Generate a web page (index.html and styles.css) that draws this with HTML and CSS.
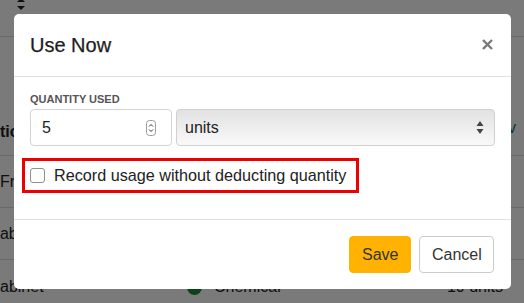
FILE: index.html
```html
<!DOCTYPE html>
<html lang="en">
<head>
  <meta charset="UTF-8" />
  <title>Use Now</title>
  <link rel="stylesheet" href="styles.css">
</head>
<body>

  <!-- Page behind the modal -->
  <div class="page">
    <div class="topbar">
      <svg class="sort" width="8" height="12" viewBox="0 0 8 12"><path d="M4 0L8 4H0Z M4 12L0 8H8Z" fill="#222"/></svg>
    </div>
    <div class="row head">
      <span class="cell-a">tion</span>
      <span class="chev">v</span>
    </div>
    <div class="row"><span class="cell-a">Fridge</span></div>
    <div class="row"><span class="cell-a">Lab bench</span></div>
    <div class="row last">
      <span class="cell-a">abinet</span>
      <span class="cell-b"><i class="dot"></i>Chemical</span>
      <span class="cell-c">10 units</span>
    </div>
  </div>

  <!-- Modal -->
  <div class="backdrop">
    <div class="modal">
      <div class="modal-header">
        <h3>Use Now</h3>
        <svg class="close" width="11" height="11" viewBox="0 0 11 11"><path d="M1 1L10 10M10 1L1 10" stroke="#7a7a7a" stroke-width="2.4"/></svg>
      </div>

      <div class="modal-body">
        <label class="field-label">QUANTITY USED</label>
        <div class="qty-row">
          <div class="number-field">
            <span>5</span>
            <svg class="spin" width="10" height="16" viewBox="0 0 10 16"><rect x="0.5" y="0.5" width="9" height="15" rx="3" fill="#fff" stroke="#9a9a9a"/><path d="M3 6.5L5 4.5L7 6.5M3 9.5L5 11.5L7 9.5" fill="none" stroke="#333" stroke-width="1"/></svg>
          </div>
          <div class="select-field">
            <span>units</span>
            <svg width="8" height="13" viewBox="0 0 8 13"><path d="M4 0L7.5 5H0.5Z M4 13L0.5 8H7.5Z" fill="#444"/></svg>
          </div>
        </div>

        <div class="check-row">
          <span class="checkbox"></span>
          <span>Record usage without deducting quantity</span>
        </div>
      </div>

      <div class="modal-footer">
        <button class="btn btn-save">Save</button>
        <button class="btn btn-cancel">Cancel</button>
      </div>
    </div>
  </div>

</body>
</html>
```

FILE: styles.css
```css
/* Global reset and font settings */
* { box-sizing: border-box; }
body, html {
  margin: 0;
  padding: 0;
  font-family: 'Liberation Sans', Arial, sans-serif;
  background-color: #fff;
  color: #333;
  overflow: hidden;
}

/* Page content behind the backdrop */
.page {
  width: 524px;
  height: 303px;
}
.topbar {
  height: 39px;
  border-bottom: 1px solid #ddd;
  padding-left: 17px;
}
.sort { display: block; margin-top: -2px; }
.row {
  height: 52px;
  border-bottom: 1px solid #ddd;
  display: flex;
  align-items: center;
  font-size: 16px;
  color: #222;
}
.row.head {
  height: 119px;
  align-items: flex-end;
  padding-bottom: 14px;
  font-weight: bold;
}
.row.last { align-items: flex-start; padding-top: 18px; }
.cell-a { margin-left: 0; }
.row:nth-child(4) .cell-a { margin-left: -9px; }
.cell-b {
  position: absolute;
  left: 187px;
  display: flex;
  align-items: center;
  gap: 12px;
}
.dot {
  width: 15px;
  height: 15px;
  border-radius: 50%;
  background: #1b8a2c;
  display: inline-block;
}
.cell-c { margin-left: auto; margin-right: 21px; }
.chev {
  margin-left: auto;
  margin-right: 8px;
  color: #0a6f84;
  font-weight: normal;
  margin-bottom: 4px;
}

/* Backdrop and modal */
.backdrop {
  position: fixed;
  inset: 0;
  background: rgba(0, 0, 0, 0.52);
  padding: 14px 13px 0 14px;
}
.modal {
  width: 497px;
  background: #fff;
  border-radius: 5px;
}
.modal-header {
  height: 63px;
  border-bottom: 1px solid #dee2e6;
  display: flex;
  align-items: center;
  justify-content: space-between;
  padding: 0 18px 0 16px;
}
.modal-header h3 {
  margin: 0;
  font-size: 20px;
  font-weight: normal;
  color: #1e1e1e;
  -webkit-text-stroke: 0.25px #1e1e1e;
}
.close { display: block; margin-bottom: 2px; }

.modal-body {
  padding: 15px 16px 26px 16px;
  border-bottom: 1px solid #dee2e6;
}
.field-label {
  display: block;
  font-size: 11px;
  font-weight: bold;
  color: #555;
  line-height: 14px;
  margin-bottom: 3px;
}
.qty-row {
  display: flex;
  gap: 4px;
}
.number-field {
  width: 142px;
  height: 37px;
  border: 1px solid #d4d4d4;
  border-radius: 4px;
  display: flex;
  align-items: center;
  justify-content: space-between;
  padding: 0 15px 0 11px;
  font-size: 16px;
  color: #222;
}
.spin { display: block; }
.select-field {
  flex: 1;
  height: 37px;
  border: 1px solid #d0d0d0;
  border-radius: 4px;
  background: linear-gradient(#e2e2e2, #f9f9f9);
  display: flex;
  align-items: center;
  justify-content: space-between;
  padding: 0 10px 0 8px;
  font-size: 16px;
  color: #222;
}
.select-field svg { display: block; }

/* Highlighted checkbox row */
.check-row {
  margin: 12px 0 0 -8px;
  width: 337px;
  height: 35px;
  border: 3.5px solid #ee0000;
  display: flex;
  align-items: center;
  gap: 9px;
  padding-left: 5px;
  font-size: 16.2px;
  color: #222;
}
.checkbox {
  width: 15px;
  height: 15px;
  border: 1px solid #8e8e8e;
  border-radius: 3px;
  background: #fff;
}

/* Footer buttons */
.modal-footer {
  height: 69px;
  display: flex;
  align-items: center;
  justify-content: flex-end;
  gap: 8px;
  padding: 0 17px 0 0;
}
.btn {
  height: 37px;
  border-radius: 4px;
  font-family: 'Liberation Sans', Arial, sans-serif;
  font-size: 16px;
  color: #333;
  padding: 0 12px;
}
.btn-save {
  width: 62px;
  background: #ffb300;
  border: 1px solid #ffb300;
}
.btn-cancel {
  width: 75px;
  background: #fff;
  border: 1px solid #ccc;
}
```
